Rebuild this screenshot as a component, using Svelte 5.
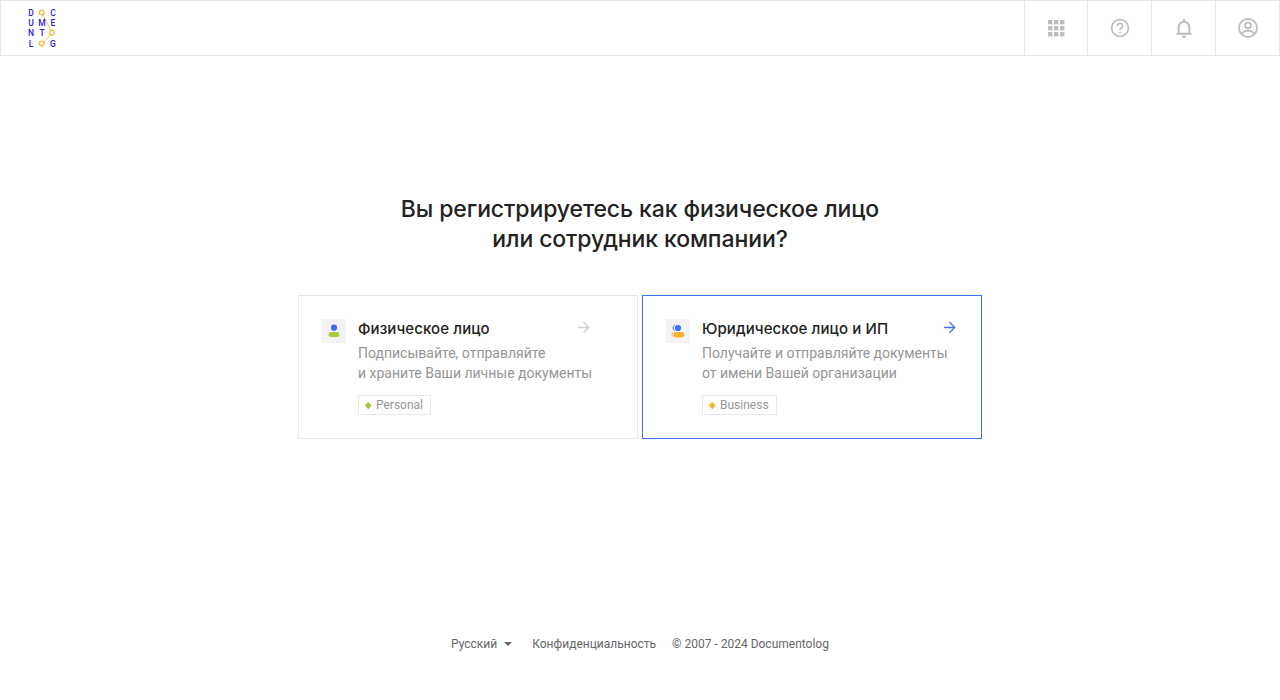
<script>
  const logo = [
    ['D', 31, 13], ['C', 53, 13],
    ['U', 31, 23], ['M', 42, 23], ['E', 53, 23],
    ['N', 31, 33], ['T', 42, 33],
    ['L', 31, 44], ['G', 53, 44]
  ];
  const cards = [
    { title: 'Физическое лицо', l1: 'Подписывайте, отправляйте', l2: 'и храните Ваши личные документы', tag: 'Personal', dot: '#a4cc3a', active: false },
    { title: 'Юридическое лицо и ИП', l1: 'Получайте и отправляйте документы', l2: 'от имени Вашей организации', tag: 'Business', dot: '#fbb02d', active: true }
  ];
  const grid = [0, 1, 2];
</script>

<div class="page">
  <header class="top">
    <a class="logo" href="#top" aria-label="Documentolog">
      <svg width="40" height="44" viewBox="20 6 40 44">
        <path d="M42 13 L52 33 L42 44" fill="none" stroke="#f5bd3c" stroke-width="0.9" />
        <circle cx="41.7" cy="12.6" r="2.4" fill="#fff" stroke="#f5b82e" stroke-width="1.2" />
        <circle cx="51.8" cy="32.7" r="2.4" fill="#fff" stroke="#f5b82e" stroke-width="1.2" />
        <circle cx="41.7" cy="43.4" r="2.4" fill="#fff" stroke="#f5b82e" stroke-width="1.2" />
        {#each logo as [ch, x, y]}
          <text {x} y={y + 3} class="lt" text-anchor="middle">{ch}</text>
        {/each}
      </svg>
    </a>
    <nav class="tools">
      <div class="cell">
        <svg width="18" height="18" viewBox="0 0 18 18" fill="#bdbdbd">
          {#each grid as r}
            {#each grid as c}
              <rect x={1 + c * 6} y={1 + r * 6} width="4.4" height="4.4" />
            {/each}
          {/each}
        </svg>
      </div>
      <div class="cell">
        <svg width="20" height="20" viewBox="0 0 20 20" fill="none" stroke="#bdbdbd" stroke-width="1.7">
          <circle cx="10" cy="10" r="8.4" />
          <path d="M7.4 7.9a2.6 2.6 0 1 1 4.1 2.1c-.9.6-1.5 1-1.5 2.1" />
          <circle cx="10" cy="14.4" r="1" fill="#bdbdbd" stroke="none" />
        </svg>
      </div>
      <div class="cell">
        <svg width="18" height="20" viewBox="0 0 18 20" fill="none" stroke="#bdbdbd" stroke-width="2">
          <path d="M1.5 15.7h15M3.7 15.7V9a5.3 5.3 0 0 1 10.6 0v6.7" />
          <path d="M7.2 18.8h3.6M9 1v2.2" />
        </svg>
      </div>
      <div class="cell">
        <svg width="20" height="20" viewBox="0 0 20 20" fill="none" stroke="#bdbdbd" stroke-width="1.8">
          <circle cx="10" cy="10" r="9" />
          <circle cx="10" cy="7.6" r="2.9" />
          <path d="M3.6 15.6c1.4-2 3.6-3 6.4-3s5 1 6.4 3" />
        </svg>
      </div>
    </nav>
  </header>

  <main class="main">
    <h1>Вы регистрируетесь как физическое лицо<br />или сотрудник компании?</h1>
    <div class="cards">
      {#each cards as card}
        <article class="card" class:active={card.active}>
          <div class="ico">
            {#if card.active}
              <svg width="14" height="14" viewBox="0 0 14 14">
                <path d="M3.8 1.4a2.8 2.8 0 0 0 0 5.2" fill="none" stroke="#3d6ff2" stroke-width="1" />
                <circle cx="7" cy="4" r="3.1" fill="#3d6ff2" />
                <path d="M2.4 8.4a2.4 2.4 0 0 0 0 4.4" fill="none" stroke="#fbb02d" stroke-width="1" />
                <rect x="2.4" y="8" width="10.8" height="5.4" rx="2.7" fill="#fbb02d" />
              </svg>
            {:else}
              <svg width="14" height="14" viewBox="0 0 14 14">
                <circle cx="7" cy="3.7" r="3.1" fill="#3d6ff2" />
                <rect x="1.6" y="8" width="10.8" height="5" rx="2.5" fill="#a4cc3a" />
              </svg>
            {/if}
          </div>
          <div class="body">
            <h2>{card.title}</h2>
            <p>{card.l1}<br />{card.l2}</p>
            <span class="tag"><i style:background={card.dot}></i>{card.tag}</span>
          </div>
          <svg class="arrow" width="13" height="13" viewBox="0 0 14 14" fill="none" stroke={card.active ? '#4f6ef7' : '#cfcfcf'} stroke-width="1.4">
            <path d="M1 7h11.4M7 1.4 12.6 7 7 12.6" />
          </svg>
        </article>
      {/each}
    </div>
  </main>

  <footer class="foot">
    <span class="lang">Русский<b></b></span>
    <span>Конфиденциальность</span>
    <span>© 2007 - 2024 Documentolog</span>
  </footer>
</div>

<style>
  :global(body) {
    margin: 0;
    background: #fff;
  }
  .page {
    min-height: 700px;
    display: flex;
    flex-direction: column;
    font-family: Roboto, "Liberation Sans", sans-serif;
  }
  .top {
    height: 56px;
    box-sizing: border-box;
    border: 1px solid #e6e6e6;
    border-right: 0;
    display: flex;
    justify-content: space-between;
  }
  .logo {
    display: block;
    margin: 5px 0 0 19px;
    height: 44px;
  }
  .lt {
    font: 500 8.5px Roboto, sans-serif;
    fill: #2a20d8;
  }
  .tools {
    display: flex;
  }
  .cell {
    width: 64px;
    box-sizing: border-box;
    border-right: 1px solid #e6e6e6;
    display: flex;
    align-items: center;
    justify-content: center;
  }
  .cell:first-child {
    border-left: 1px solid #e6e6e6;
  }
  .main {
    display: flex;
    flex-direction: column;
    align-items: center;
  }
  h1 {
    margin: 138px 0 41px;
    font: 500 23px/30px Inter, sans-serif;
    letter-spacing: -0.1px;
    color: #222;
    text-align: center;
  }
  .cards {
    display: flex;
    gap: 4px;
  }
  .card {
    width: 340px;
    height: 144px;
    box-sizing: border-box;
    border: 1px solid #e8e8e8;
    padding: 23px;
    display: flex;
    gap: 12px;
    position: relative;
  }
  .card.active {
    border-color: #3d76f0;
  }
  .ico {
    width: 24px;
    height: 24px;
    background: #f3f3f3;
    display: flex;
    align-items: center;
    justify-content: center;
    flex: none;
  }
  .body {
    min-width: 0;
  }
  h2 {
    margin: 0;
    font: 500 15px/20px Inter, sans-serif;
    letter-spacing: 0.1px;
    color: #222;
  }
  p {
    margin: 4px 0 0;
    font-size: 14px;
    line-height: 20px;
    color: #969696;
    white-space: nowrap;
  }
  .tag {
    display: inline-flex;
    align-items: center;
    margin-top: 12px;
    height: 20px;
    box-sizing: border-box;
    border: 1px solid #e8e8e8;
    padding: 0 7px 0 7px;
    font-size: 12px;
    color: #969696;
  }
  .tag i {
    width: 4.5px;
    height: 4.5px;
    margin-right: 5.5px;
    transform: rotate(45deg);
  }
  .arrow {
    position: absolute;
    top: 25px;
    right: 47px;
  }
  .card.active .arrow {
    right: 25px;
  }
  .foot {
    margin-top: auto;
    padding-bottom: 49px;
    display: flex;
    justify-content: center;
    gap: 16px;
    font-size: 12px;
    line-height: 14px;
    color: #666;
  }
  .lang {
    display: inline-flex;
    align-items: center;
    gap: 7px;
    margin-right: 4px;
  }
  .lang b {
    width: 0;
    height: 0;
    border: 4px solid transparent;
    border-top-color: #666;
    border-bottom: 0;
  }
</style>
